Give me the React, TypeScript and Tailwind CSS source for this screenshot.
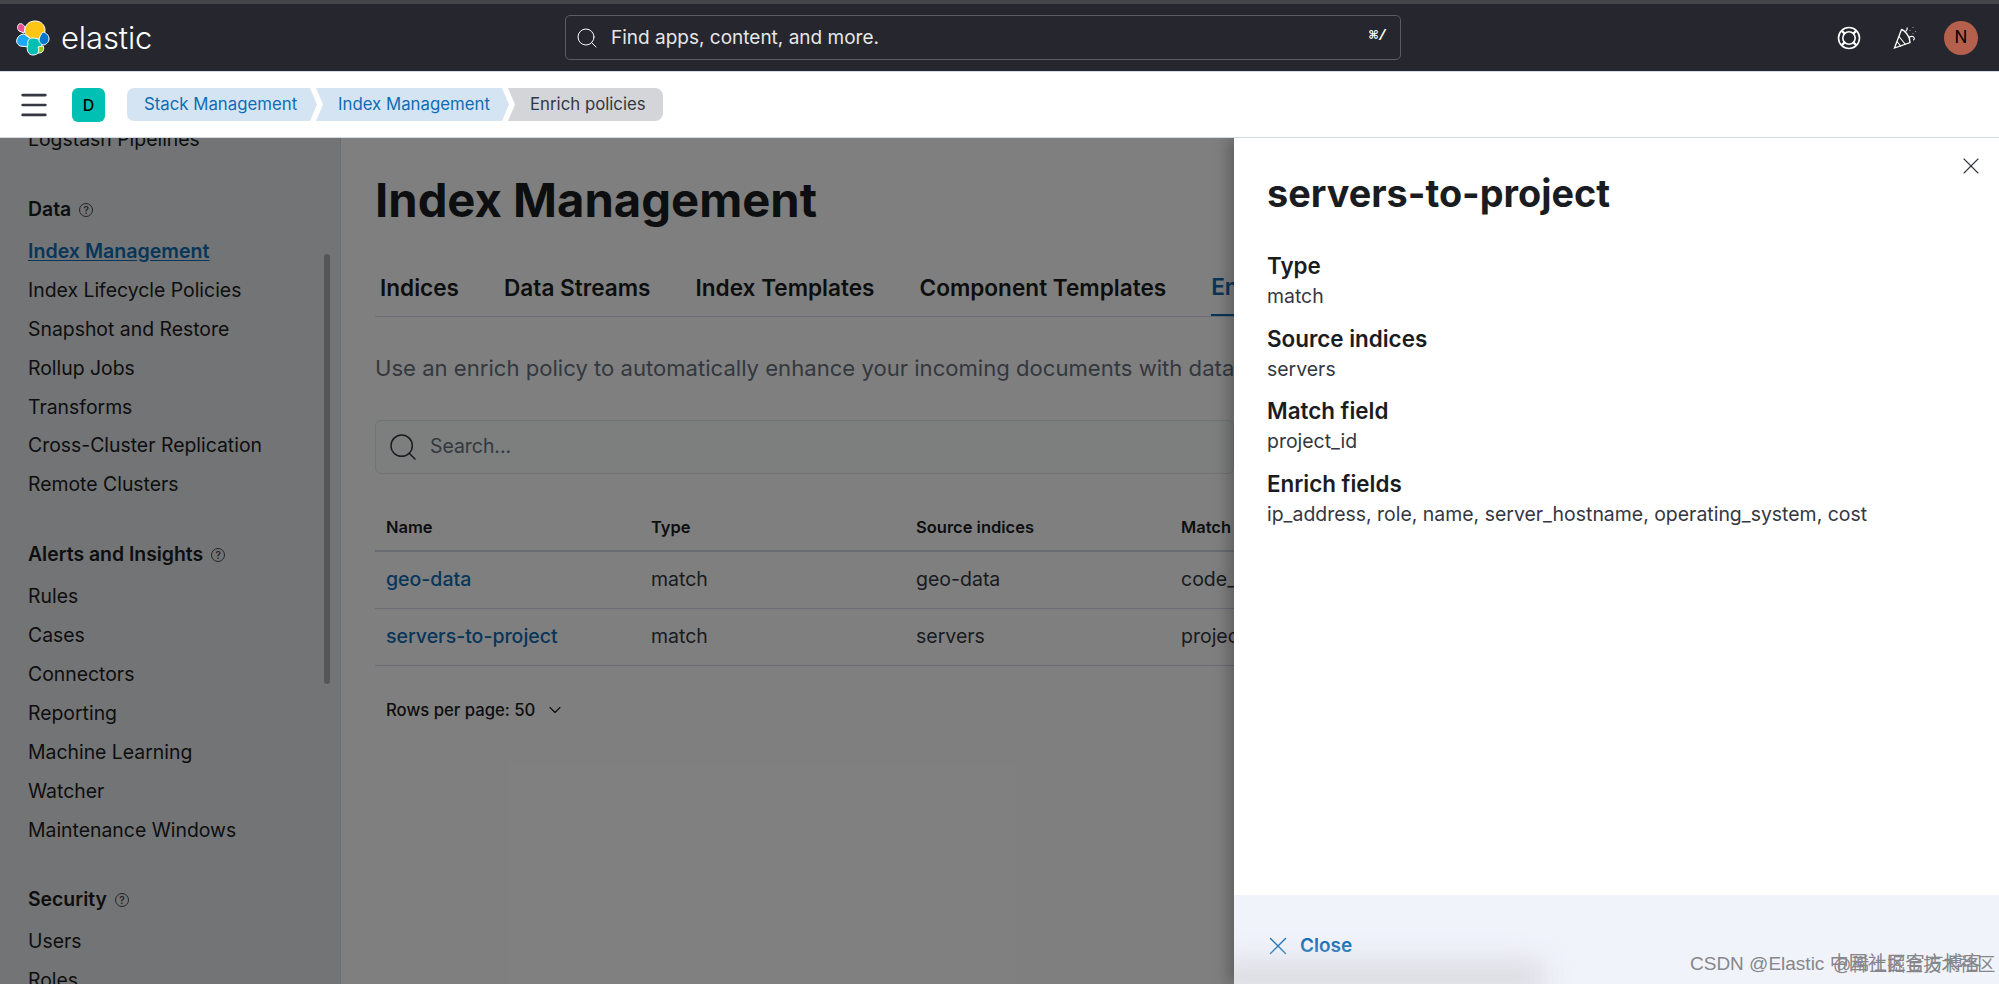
import { ChevronDown, Menu, Search, X } from "lucide-react"

const sideFont = { fontFamily: "Inter, sans-serif" }

const groups = [
  {
    title: "Data",
    items: [
      "Index Management",
      "Index Lifecycle Policies",
      "Snapshot and Restore",
      "Rollup Jobs",
      "Transforms",
      "Cross-Cluster Replication",
      "Remote Clusters",
    ],
  },
  {
    title: "Alerts and Insights",
    items: ["Rules", "Cases", "Connectors", "Reporting", "Machine Learning", "Watcher", "Maintenance Windows"],
  },
  { title: "Security", items: ["Users", "Roles"] },
]

const tabs = ["Indices", "Data Streams", "Index Templates", "Component Templates"]

const rows = [
  ["geo-data", "match", "geo-data", "code_"],
  ["servers-to-project", "match", "servers", "projec"],
]

const details = [
  ["Type", "match"],
  ["Source indices", "servers"],
  ["Match field", "project_id"],
  ["Enrich fields", "ip_address, role, name, server_hostname, operating_system, cost"],
]

const ElasticLogo = () => (
  <svg width="34" height="36" viewBox="0 0 34 36">
    <path d="M9 9c1-6 6-8 10-8 6 0 10 4 10 9 0 3-1 5-2 7l-9 4-8-6C9 13 8 11 9 9z" fill="#fec514" stroke="#fff" />
    <path d="M3 4c2-1 4 0 6 3l-1 6-5-2C1 9 1 6 3 4z" fill="#f04e98" stroke="#fff" />
    <path d="M8 14l7 5-2 8-9-1c-3-2-4-4-3-7 1-3 4-5 7-5z" fill="#1ba9f5" stroke="#fff" />
    <path d="M12 24c-1-3 1-6 5-6 4 0 8 2 9 6 0 5-3 11-9 11-5 0-7-5-5-11z" fill="#00bfb3" stroke="#fff" />
    <path d="M27 12c4 1 6 4 6 7s-3 6-6 6c-2-1-3-2-4-4 0-4 2-7 4-9z" fill="#0077cc" stroke="#fff" />
    <path d="M22 27l5-1c1 1 1 3 0 5-1 2-3 2-5 2 1-2 1-4 0-6z" fill="#93c90e" stroke="#fff" />
  </svg>
)

const LifeBuoy = () => (
  <svg width="24" height="24" viewBox="0 0 24 24" fill="none" stroke="#fff" strokeWidth="1.6">
    <circle cx="12" cy="12" r="10.5" />
    <circle cx="12" cy="12" r="6.2" />
    <path d="M5 5l3 3M19 5l-3 3M5 19l3-3M19 19l-3-3" strokeWidth="2.4" />
  </svg>
)

const Popper = () => (
  <svg width="24" height="24" viewBox="0 0 24 24" fill="none" stroke="#fff" strokeWidth="1.3">
    <path d="M8.5 3.5L1.5 22l15.5-5.5c0-3-1-6-3-8.5s-3.500-4-5.500-4.500z" />
    <path d="M6 10.500l6.500 8M4 15.500l4 5" strokeWidth="1.100" />
    <path d="M12.500 5.500c1.500-1 2-2.500 1.500-4M16 11.500c1.500-1.500 4-1.500 5 0 .8 1.200 0 2.500-1 2.500M17 4.500v.6M20 1.500v.6M22.500 5v.6M20 7.500v.6" strokeWidth="1.100" />
  </svg>
)

const Help = () => (
  <span className="ml-2 flex h-[14px] w-[14px] items-center justify-center rounded-full border border-[#4a4b4f] text-[10px] leading-none text-[#4a4b4f]">
    ?
  </span>
)

const App = () => {
  return (
    <div className="flex h-[984px] w-[1999px] flex-col overflow-hidden bg-white" style={sideFont}>
      <header className="flex h-[72px] shrink-0 items-center border-t-4 border-b border-t-[#45464b] border-b-[#d3dae6] bg-[#25262e] pr-[21px] pl-[16px]">
        <div className="flex w-[549px] items-center gap-[11px]">
          <ElasticLogo />
          <span className="text-[31px] leading-none font-light tracking-[-0.1px] text-white">elastic</span>
        </div>
        <div className="flex h-[45px] w-[836px] items-center rounded-[5px] border border-[#5a5c63] bg-[#25262e] pr-[13px] pl-[9px] text-white">
          <Search size={24} strokeWidth={1} />
          <span className="mt-[2px] ml-[12px] text-[19px] text-[#e6e6e8]">Find apps, content, and more.</span>
          <span className="ml-auto font-mono text-[15px] font-bold">⌘/</span>
        </div>
        <div className="ml-auto flex items-center">
          <LifeBuoy />
          <span className="ml-[32px]">
            <Popper />
          </span>
          <span className="ml-[27px] flex h-[34px] w-[34px] items-center justify-center rounded-full bg-[#b4604d] text-[17px] text-black">
            N
          </span>
        </div>
      </header>

      <nav className="relative z-10 flex h-[66px] shrink-0 items-center border-b border-[#d3dae6] bg-white pl-[17px]">
        <Menu size={34} strokeWidth={1.9} className="text-[#343741]" />
        <span className="ml-[21px] flex h-[34px] w-[33px] items-center justify-center rounded-[6px] bg-[#00bfb3] text-[16px] font-medium text-black">
          D
        </span>
        <div className="ml-[22px] flex items-center text-[16.8px]">
          <span className="flex h-[33px] w-[190px] items-center rounded-l-[7px] bg-[#d5e4f3] pl-[17px] text-[#0f6cb5] [clip-path:polygon(0_0,calc(100%-7px)_0,100%_50%,calc(100%-7px)_100%,0_100%)]">
            Stack Management
          </span>
          <span className="ml-[-1px] flex h-[33px] w-[193px] items-center bg-[#d5e4f3] pl-[22px] text-[#0f6cb5] [clip-path:polygon(0_0,calc(100%-7px)_0,100%_50%,calc(100%-7px)_100%,0_100%,7px_50%)]">
            Index Management
          </span>
          <span className="ml-[-1px] flex h-[33px] w-[155px] items-center rounded-r-[8px] bg-[#d3d5d9] pl-[22px] text-[#343741] [clip-path:polygon(0_0,100%_0,100%_100%,0_100%,7px_50%)]">
            Enrich policies
          </span>
        </div>
      </nav>

      <div className="flex min-h-0 flex-1">
        <div className="relative flex min-w-0 flex-1 overflow-hidden">
          <aside className="relative w-[341px] shrink-0 overflow-hidden border-r border-[#dcdde0] bg-[#e7e8eb] pl-[28px] text-[#1a1c21]">
            <div className="-mt-[18px] h-[39px] text-[19.4px] leading-[39px]">Logstash Pipelines</div>
            {groups.map((g) => (
              <div key={g.title} className="mt-[31px]">
                <div className="flex h-[39px] items-center text-[19.4px] font-semibold">
                  {g.title}
                  <Help />
                </div>
                <ul className="mt-[3px]">
                  {g.items.map((item) => (
                    <li
                      key={item}
                      className={
                        item === "Index Management"
                          ? "h-[38.9px] text-[19.6px] leading-[38.9px] font-semibold text-[#0f6cb5] underline underline-offset-2"
                          : "h-[38.9px] text-[19.4px] leading-[38.9px]"
                      }
                    >
                      {item}
                    </li>
                  ))}
                </ul>
              </div>
            ))}
            <div className="absolute top-[116px] right-[10px] h-[430px] w-[6px] rounded-full bg-[#a8aaae]" />
          </aside>

          <main className="min-w-0 flex-1 overflow-hidden bg-white pl-[34px] text-[#1a1c21]">
            <h1 className="mt-[27px] text-[47.2px] leading-[70px] font-bold whitespace-nowrap">Index Management</h1>
            <div className="mt-[23px] flex h-[59px] items-center gap-[45px] border-b border-[#d3dae6] pl-[5px] text-[22.6px] font-semibold whitespace-nowrap">
              {tabs.map((t) => (
                <span key={t} className="mt-[2px]">
                  {t}
                </span>
              ))}
              <span className="flex h-full items-center border-b-2 border-[#0f6cb5] pt-[2px] text-[#0f6cb5]">Enrich Policies</span>
            </div>
            <p className="mt-[35px] text-[22.1px] leading-[32px] whitespace-nowrap text-[#69707d]">
              Use an enrich policy to automatically enhance your incoming documents with data from your existing indices.
            </p>
            <div className="mt-[36px] flex h-[54px] items-center rounded-[6px] border border-[#e3e6ea] bg-[#fbfcfd] pl-[11px] text-[#69707d]">
              <Search size={32} strokeWidth={1.1} className="text-[#343741]" />
              <span className="ml-[11px] text-[19.4px]">Search...</span>
            </div>
            <table className="mt-[31px] w-[1200px] table-fixed border-collapse text-left text-[19.5px]">
              <thead>
                <tr className="h-[46px] border-b-2 border-[#d3dae6] text-[16.5px]">
                  {["Name", "Type", "Source indices", "Match field", ""].map((h, i) => (
                    <th key={i} className="w-[265px] pl-[11px] font-semibold whitespace-nowrap">
                      {h}
                    </th>
                  ))}
                </tr>
              </thead>
              <tbody>
                {rows.map((r) => (
                  <tr key={r[0]} className="h-[57px] border-b border-[#d3dae6]">
                    {r.map((c, i) => (
                      <td key={i} className={i === 0 ? "pl-[11px] font-medium text-[#0f6cb5]" : "pl-[11px] text-[#343741]"}>
                        {c}
                      </td>
                    ))}
                    <td />
                  </tr>
                ))}
              </tbody>
            </table>
            <div className="mt-[32px] flex items-center pl-[11px] text-[16.7px] font-medium">
              Rows per page: 50
              <ChevronDown size={20} strokeWidth={1.4} className="ml-[10px]" />
            </div>
          </main>

          <div className="pointer-events-none absolute inset-0 bg-[#000]/50" />
        </div>

        <section className="relative flex w-[765px] shrink-0 flex-col overflow-hidden bg-white text-[#1a1c21] shadow-[-6px_0_14px_rgba(0,0,0,0.25)]">
          <X size={28} strokeWidth={0.95} className="absolute top-[14px] right-[14px] text-[#343741]" />
          <div className="flex-1 pt-[30px] pl-[33px]">
            <h2 className="text-[37.8px] leading-[50px] font-bold">servers-to-project</h2>
            <dl className="mt-[32px]">
              {details.map(([k, v]) => (
                <div key={k} className="mb-[10.7px]">
                  <dt className="text-[22.4px] leading-[31px] font-semibold">{k}</dt>
                  <dd className="text-[19.45px] leading-[31px] text-[#343741]">{v}</dd>
                </div>
              ))}
            </dl>
          </div>
          <div className="flex h-[89px] shrink-0 items-center bg-[#f1f3fb] pt-[13px] pl-[29px] text-[#0f6cb5]">
            <X size={30} strokeWidth={1.1} />
            <span className="ml-[7px] text-[19px] font-semibold">Close</span>
          </div>
          <div className="absolute -bottom-[10px] -left-[20px] h-[32px] w-[330px] bg-[#d9dbe0] blur-[14px]" />
          <span
            className="absolute bottom-[6px] left-[456px] text-[19px] whitespace-nowrap text-[#85878b]"
            style={{ fontFamily: '"Liberation Sans", "Noto Sans CJK SC", sans-serif' }}
          >
            CSDN @Elastic 中国社区官方博客
          </span>
          <span
            className="absolute bottom-[5px] left-[599px] text-[18px] whitespace-nowrap text-[#85878b]"
            style={{ fontFamily: '"Liberation Sans", "Noto Sans CJK SC", sans-serif' }}
          >
            @稀土掘金技术社区
          </span>
        </section>
      </div>
    </div>
  )
}

export default App
